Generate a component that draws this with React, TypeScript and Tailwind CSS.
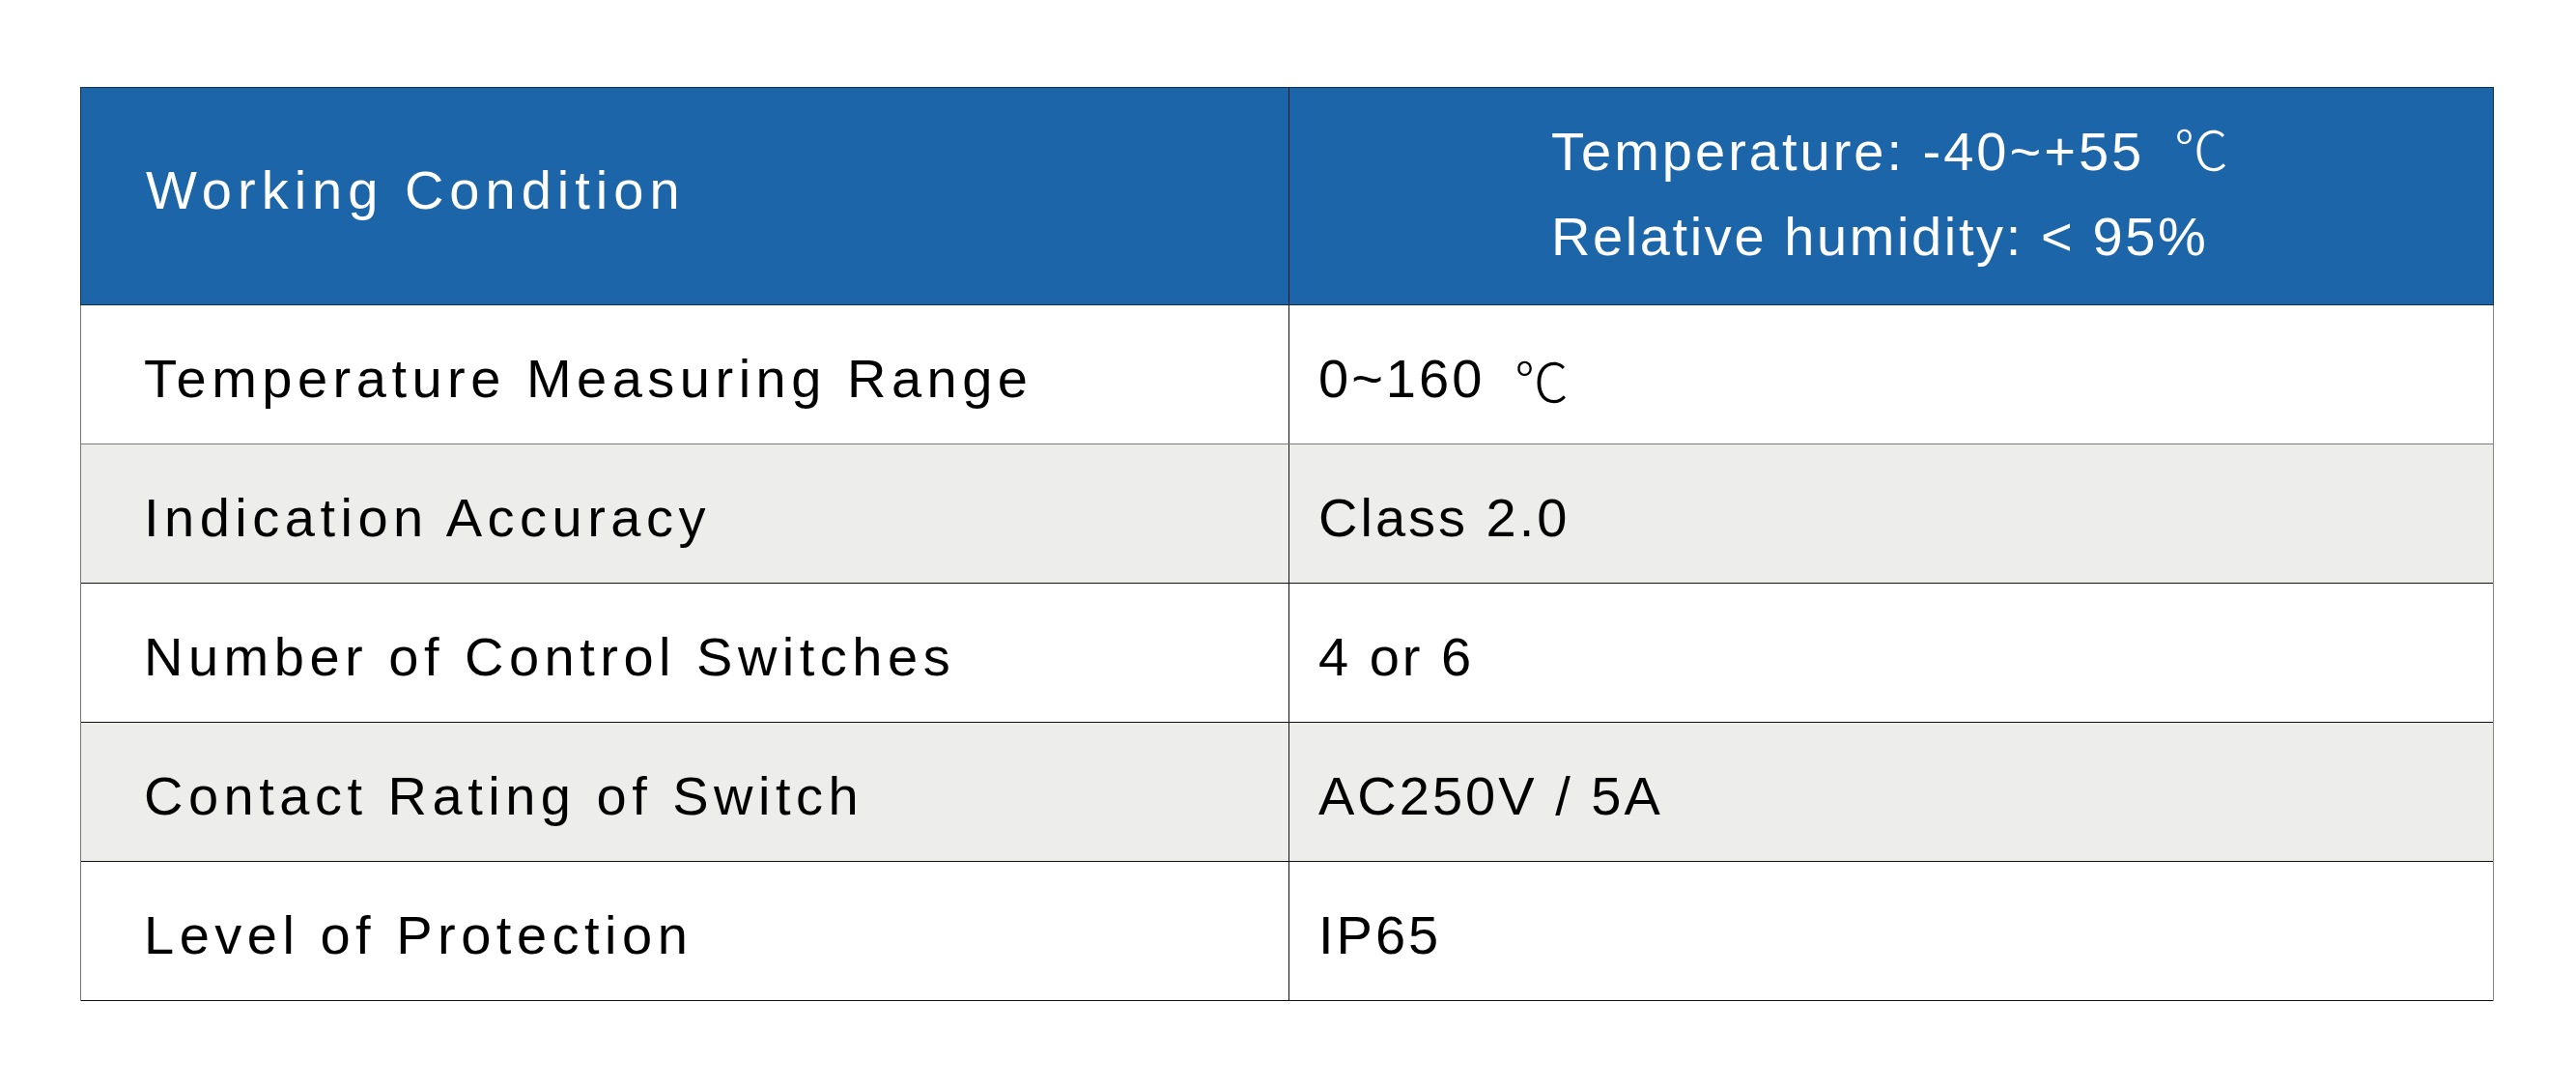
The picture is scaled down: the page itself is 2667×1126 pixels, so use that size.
const rows = [
  { label: "Temperature Measuring Range", value: "0~160", unit: true, gray: false, line: "border-[#7a7a7a]" },
  { label: "Indication Accuracy", value: "Class 2.0", unit: false, gray: true, line: "border-[#111111]" },
  { label: "Number of Control Switches", value: "4 or 6", unit: false, gray: false, line: "border-[#111111]" },
  { label: "Contact Rating of Switch", value: "AC250V / 5A", unit: false, gray: true, line: "border-[#111111]" },
  { label: "Level of Protection", value: "IP65", unit: false, gray: false, line: "border-[#111111]" },
];

function Celsius() {
  // ℃ comes from the CJK family, thinner than the Latin digits
  return <span className="font-['Noto_Sans_CJK_SC',sans-serif] font-light">&nbsp;&nbsp;℃</span>;
}

export default function App() {
  return (
    <div className="min-h-screen w-full bg-white pl-[83px] pt-[90px] font-['Liberation_Sans','Noto_Sans_CJK_SC',sans-serif] text-black">
      <div className="w-[2499px]">
        {/* header */}
        <div className="grid h-[226px] grid-cols-[1251px_1fr] border border-[#15304d] bg-[#1b65a8] text-white">
          <div className="flex items-center border-r border-[#0d1a28] pb-[12px] pl-[67px] text-[56px] tracking-[6px]">
            Working Condition
          </div>
          <div className="flex items-center justify-center pb-[10px]">
            <div className="text-[56px] leading-[88px] tracking-[3px]">
              <div>
                Temperature: -40~+55
                <Celsius />
              </div>
              <div className="tracking-[2.6px]">Relative humidity: &lt; 95%</div>
            </div>
          </div>
        </div>

        {/* body rows */}
        <div className="border-l border-r border-l-[#777777] border-r-[#888888]">
          {rows.map((r) => (
            <div
              key={r.label}
              className={`grid h-[144px] grid-cols-[1250px_1fr] border-b ${r.line} ${r.gray ? "bg-[#ededeb]" : "bg-white"}`}
            >
              <div className="flex items-center pl-[65px] pt-[8px] text-[56px] tracking-[5.5px]">{r.label}</div>
              <div className="flex items-center border-l border-[#111111] pl-[30px] pt-[8px] text-[56px] tracking-[3px]">
                {r.value}
                {r.unit && <Celsius />}
              </div>
            </div>
          ))}
        </div>
      </div>
    </div>
  );
}
